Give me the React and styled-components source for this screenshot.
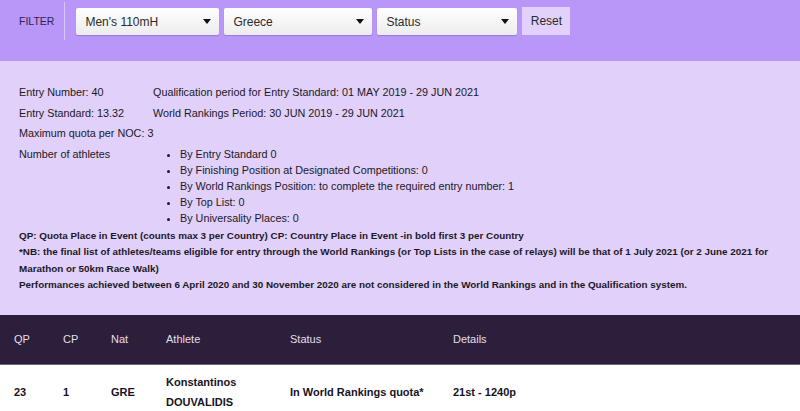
import React from "react";
import styled, { createGlobalStyle } from "styled-components";

const Global = createGlobalStyle`
  html, body { margin: 0; padding: 0; background: #ffffff; }
  body { font-family: "Liberation Sans", Arial, sans-serif; color: #1c1826; }
`;

const FilterBar = styled.div`
  display: flex;
  align-items: flex-start;
  height: 61px;
  box-sizing: border-box;
  padding-top: 2px;
  background: #b997f8;
`;

const FilterLabel = styled.div`
  height: 38px;
  display: flex;
  align-items: center;
  padding: 0 10px 0 19px;
  border-right: 1px solid #d6c6fb;
  font-size: 10.5px;
  color: #2f2150;
  margin-right: 11px;
`;

const Controls = styled.div`
  display: flex;
  gap: 5px;
  margin-top: 6px;
`;

const Select = styled.div`
  width: ${(p) => p.$w}px;
  height: 27px;
  box-sizing: border-box;
  display: flex;
  align-items: center;
  justify-content: space-between;
  padding: 0 8px 0 9px;
  background: linear-gradient(#ffffff, #ececec);
  border-radius: 2px;
  box-shadow: 0 1px 1px rgba(60, 30, 110, 0.25);
  font-size: 12px;
  color: #2a2a2a;
`;

const Caret = styled.span`
  width: 0;
  height: 0;
  border-left: 4px solid transparent;
  border-right: 4px solid transparent;
  border-top: 5px solid #111;
`;

const ResetButton = styled.div`
  height: 28px;
  margin-top: -1px;
  width: 48px;
  box-sizing: border-box;
  display: flex;
  align-items: center;
  justify-content: center;
  background: #e2d2fb;
  font-size: 12px;
  color: #2a2a2a;
`;

const Info = styled.div`
  background: #e0d0fa;
  padding: 21px 19px 21px 19px;
  font-size: 10.8px;
  color: #1c1826;
`;

const InfoRow = styled.div`
  display: grid;
  grid-template-columns: 134px 1fr;
  line-height: ${(p) => p.$lh || 20.5}px;
  padding-top: ${(p) => p.$pt || 0}px;
  white-space: nowrap;
`;

const Bullets = styled.ul`
  margin: 0;
  padding: 0 0 0 27px;
  list-style: disc;
  line-height: 16px;
`;

const Notes = styled.div`
  margin-top: 2px;
  font-weight: bold;
  line-height: 16.5px;
  font-size: 9.85px;
  white-space: nowrap;
`;

const TableHead = styled.div`
  display: grid;
  grid-template-columns: 49px 48px 55px 124px 163px 1fr;
  padding-left: 14px;
  height: 49px;
  align-items: center;
  background: #2b1f3b;
  border-bottom: 1px solid #6e6678;
  color: #e4dfec;
  font-size: 11px;
`;

const TableRow = styled.div`
  display: grid;
  grid-template-columns: 49px 48px 55px 124px 163px 1fr;
  padding: 7px 0 0 14px;
  align-items: center;
  font-size: 11px;
  font-weight: bold;
  color: #17131e;
  line-height: 20px;
`;

export default function App() {
  return (
    <>
      <Global />
      <FilterBar>
        <FilterLabel>FILTER</FilterLabel>
        <Controls>
          <Select $w={143}>
            Men's 110mH <Caret />
          </Select>
          <Select $w={148}>
            Greece <Caret />
          </Select>
          <Select $w={140}>
            Status <Caret />
          </Select>
          <ResetButton>Reset</ResetButton>
        </Controls>
      </FilterBar>
      <Info>
        <InfoRow>
          <span>Entry Number: 40</span>
          <span>Qualification period for Entry Standard: 01 MAY 2019 - 29 JUN 2021</span>
        </InfoRow>
        <InfoRow>
          <span>Entry Standard: 13.32</span>
          <span>World Rankings Period: 30 JUN 2019 - 29 JUN 2021</span>
        </InfoRow>
        <InfoRow>
          <span>Maximum quota per NOC: 3</span>
        </InfoRow>
        <InfoRow $lh={16} $pt={2}>
          <span>Number of athletes</span>
          <Bullets>
            <li>By Entry Standard 0</li>
            <li>By Finishing Position at Designated Competitions: 0</li>
            <li>By World Rankings Position: to complete the required entry number: 1</li>
            <li>By Top List: 0</li>
            <li>By Universality Places: 0</li>
          </Bullets>
        </InfoRow>
        <Notes>
          <div>QP: Quota Place in Event (counts max 3 per Country) CP: Country Place in Event -in bold first 3 per Country</div>
          <div>
            *NB: the final list of athletes/teams eligible for entry through the World Rankings (or Top Lists in the case of relays) will be that of 1 July 2021 (or 2 June 2021 for
            <br />
            Marathon or 50km Race Walk)
          </div>
          <div>Performances achieved between 6 April 2020 and 30 November 2020 are not considered in the World Rankings and in the Qualification system.</div>
        </Notes>
      </Info>
      <TableHead>
        <span>QP</span>
        <span>CP</span>
        <span>Nat</span>
        <span>Athlete</span>
        <span>Status</span>
        <span>Details</span>
      </TableHead>
      <TableRow>
        <span>23</span>
        <span>1</span>
        <span>GRE</span>
        <span>
          Konstantinos
          <br />
          DOUVALIDIS
        </span>
        <span>In World Rankings quota*</span>
        <span>21st - 1240p</span>
      </TableRow>
    </>
  );
}
